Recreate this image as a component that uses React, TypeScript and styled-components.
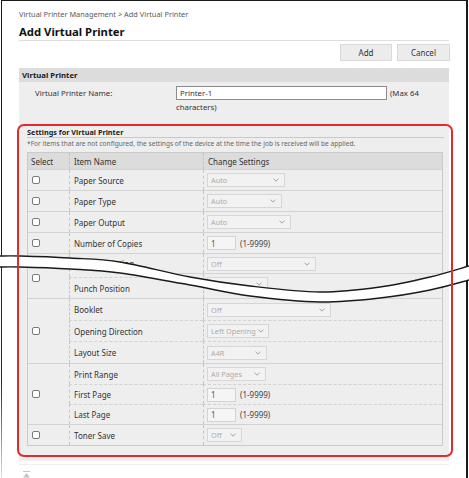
import React from 'react';
import styled, { createGlobalStyle, css } from 'styled-components';

const CANVAS_W = 469;
const CANVAS_H = 478;

type Pt = [number, number];
type Part = 'upper' | 'lower';

// Catmull-Rom spline through the points, written as cubic bezier segments.
function smoothPath(pts: Pt[]): string {
  let d = `M${pts[0][0]} ${pts[0][1]}`;
  for (let i = 0; i < pts.length - 1; i++) {
    const p0 = pts[i - 1] ?? pts[i];
    const p1 = pts[i];
    const p2 = pts[i + 1];
    const p3 = pts[i + 2] ?? p2;
    const c1x = p1[0] + (p2[0] - p0[0]) / 6;
    const c1y = p1[1] + (p2[1] - p0[1]) / 6;
    const c2x = p2[0] - (p3[0] - p1[0]) / 6;
    const c2y = p2[1] - (p3[1] - p1[1]) / 6;
    d += ` C${c1x.toFixed(1)} ${c1y.toFixed(1)} ${c2x.toFixed(1)} ${c2y.toFixed(1)} ${p2[0]} ${p2[1]}`;
  }
  return d;
}

const upperEdge = smoothPath([
  [0, 256], [20, 256], [70, 258], [120, 262], [190, 277], [250, 286],
  [320, 292], [380, 287], [430, 277], [469, 266],
]);
const lowerEdge = smoothPath([
  [0, 267], [20, 267], [70, 269], [120, 273], [190, 285], [250, 296],
  [320, 302], [380, 298], [430, 290], [469, 280],
]);

const upperClip = `${upperEdge} L${CANVAS_W} 0 L0 0 Z`;
const lowerClip = `${lowerEdge} L${CANVAS_W} ${CANVAS_H} L0 ${CANVAS_H} Z`;

const GlobalStyle = createGlobalStyle`
  html, body { margin: 0; padding: 0; background: #ffffff; }
  body { font-family: "Noto Sans", "Open Sans", sans-serif; }
  * { box-sizing: border-box; }
`;

const Canvas = styled.div`
  position: relative;
  width: ${CANVAS_W}px;
  height: ${CANVAS_H}px;
  overflow: hidden;
  display: grid;
  background: #ffffff;
`;

const Sheet = styled.div<{ $clip: string }>`
  grid-area: 1 / 1;
  width: ${CANVAS_W}px;
  height: ${CANVAS_H}px;
  clip-path: ${p => `path('${p.$clip}')`};
`;

const Frame = styled.div<{ $part: Part }>`
  margin-left: 1px;
  width: 467px;
  height: 100%;
  overflow: hidden;
  border-left: 1px solid #1a1a1a;
  border-right: 2px solid #1a1a1a;
  border-top: ${p => (p.$part === 'upper' ? '1px solid #1a1a1a' : 'none')};
  background: #ffffff;
  ${p =>
    p.$part === 'lower' &&
    css`
      border-left-color: transparent;
      background: linear-gradient(#262626, #262626 80%, #e0e0e0) left top / 1px 100% no-repeat border-box,
        #ffffff;
    `}
`;

// Parts of the page that lie wholly on the other sheet keep their place in the flow but are not painted.
const hideable = css<{ $hide?: boolean }>`
  visibility: ${p => (p.$hide ? 'hidden' : 'visible')};
`;

const Page = styled.div<{ $shift: number }>`
  margin-top: ${p => p.$shift}px;
  padding: 0 17px;
  color: #333;
  font-size: 8px;
`;

const Breadcrumb = styled.div<{ $hide?: boolean }>`
  ${hideable}
  padding-top: 7px;
  line-height: 12px;
  font-size: 7.4px;
  color: #5a5a5a;
  white-space: nowrap;
`;

const Title = styled.h1`
  margin: 4px 0 0;
  font-size: 11.3px;
  line-height: 16px;
  font-weight: 700;
  color: #111;
  border-bottom: 1px solid #dedede;
`;

const Hideable = styled.span<{ $hide?: boolean }>`
  ${hideable}
`;

const ButtonBar = styled.div<{ $hide?: boolean }>`
  ${hideable}
  display: flex;
  justify-content: flex-end;
  gap: 5px;
  margin-top: 3px;
  margin-right: -1px;
`;

const Button = styled.div<{ $w: number }>`
  width: ${p => p.$w}px;
  height: 17px;
  display: flex;
  align-items: center;
  justify-content: center;
  background: #ececec;
  border: 1px solid #d9d9d9;
  font-size: 8px;
  color: #333;
`;

const SectionHeader = styled.div<{ $hide?: boolean }>`
  ${hideable}
  margin-top: 7px;
  height: 14px;
  padding-left: 3px;
  display: flex;
  align-items: center;
  background: #dcdcdc;
  font-weight: 700;
  font-size: 7.8px;
  color: #222;
`;

const PanelBody = styled.div`
  background: #eeeeee;
  padding-bottom: 15px;
`;

const FormRow = styled.div<{ $hide?: boolean }>`
  ${hideable}
  display: flex;
  padding: 4px 0 0 16px;
  line-height: 14px;
  font-size: 7.8px;
`;

const FormLabel = styled.div`
  width: 141px;
  flex: none;
`;

const FormValue = styled.div`
  flex: 1;
  min-width: 0;
`;

const TextInput = styled.span`
  display: inline-block;
  vertical-align: top;
  width: 211px;
  height: 14px;
  margin-right: 3px;
  padding-left: 3px;
  line-height: 12px;
  background: #ffffff;
  border: 1px solid #8c8c8c;
  color: #333;
`;

const Settings = styled.div`
  margin: 0 5px 0 8px;
`;

const SettingsTitle = styled.div`
  margin-top: 13px;
  line-height: 10px;
  font-weight: 700;
  font-size: 7.3px;
  color: #222;
  border-bottom: 1px solid #c9c9c9;
`;

const Note = styled.div<{ $hide?: boolean }>`
  ${hideable}
  margin-top: 1px;
  line-height: 10px;
  font-size: 6.6px;
  color: #666;
  white-space: nowrap;
`;

const Table = styled.div`
  margin-top: 3px;
  margin-right: 1px;
  border: 1px solid #cacaca;
  background: #eeeeee;
`;

const HeaderRow = styled.div`
  display: grid;
  grid-template-columns: 41px 134px 1fr;
  height: 16px;
  background: #dcdcdc;
  color: #333;
`;

const HeaderCell = styled.div<{ $first?: boolean }>`
  display: flex;
  align-items: center;
  padding-left: ${p => (p.$first ? 3 : 4)}px;
  border-left: ${p => (p.$first ? 'none' : '1px dashed #c4c4c4')};
`;

const Group = styled.div<{ $rows: number[] }>`
  display: grid;
  grid-template-columns: 41px 134px 1fr;
  grid-template-rows: ${p => p.$rows.map(h => `${h}px`).join(' ')};
  border-top: 1px solid #d2d2d2;
`;

const CheckCell = styled.div<{ $span: number }>`
  grid-row: span ${p => p.$span};
  display: flex;
  align-items: center;
  padding-left: 4px;
`;

const Checkbox = styled.span<{ $hide?: boolean }>`
  ${hideable}
  width: 8px;
  height: 8px;
  border: 1px solid #7a7a7a;
  border-radius: 2px;
  background: #ffffff;
`;

const NameCell = styled.div<{ $sub: boolean }>`
  grid-column: 2;
  display: flex;
  align-items: center;
  padding-left: 4px;
  border-left: 1px dashed #c4c4c4;
  border-top: ${p => (p.$sub ? '1px dashed #d2d2d2' : 'none')};
  color: #333;
  white-space: nowrap;
`;

const ControlCell = styled.div<{ $sub: boolean }>`
  grid-column: 3;
  display: flex;
  align-items: center;
  padding-left: 3px;
  border-left: 1px dashed #c4c4c4;
  border-top: ${p => (p.$sub ? '1px dashed #d2d2d2' : 'none')};
`;

const ControlWrap = styled.span<{ $hide?: boolean }>`
  ${hideable}
  display: flex;
  align-items: center;
`;

const SelectBox = styled.span<{ $w: number }>`
  width: ${p => p.$w}px;
  height: 14px;
  display: flex;
  align-items: center;
  justify-content: space-between;
  gap: 2px;
  padding: 0 5px 0 3px;
  background: #f2f2f2;
  border: 1px solid #d6d6d6;
  color: #ababab;
  font-size: 7.3px;
  white-space: nowrap;
`;

const NumberBox = styled.span`
  width: 29px;
  height: 14px;
  display: flex;
  align-items: center;
  padding-left: 3px;
  background: #f5f5f5;
  border: 1px solid #d3d3d3;
  color: #555;
`;

const RangeText = styled.span`
  margin-left: 4px;
  color: #444;
`;

const Footer = styled.div<{ $hide?: boolean }>`
  ${hideable}
  margin-top: 3px;
  padding: 4px 0 0 4px;
  border-top: 1px solid #eeeeee;
  height: 20px;
`;

const Overlay = styled.svg`
  position: absolute;
  left: 0;
  top: 0;
  pointer-events: none;
`;

const Highlight = styled.div`
  position: absolute;
  left: 17px;
  top: 124px;
  width: 436px;
  height: 333px;
  border: 2px solid #e52a2f;
  border-radius: 7px;
  pointer-events: none;
`;

const Chevron = () => (
  <svg width="6" height="4" viewBox="0 0 6 4" style={{ flex: 'none' }}>
    <path d="M0.5 0.6 L3 3.2 L5.5 0.6" fill="none" stroke="#9a9a9a" strokeWidth="0.9" />
  </svg>
);

const PageTopIcon = () => (
  <svg width="7" height="7" viewBox="0 0 7 7">
    <rect x="0" y="0" width="7" height="1" fill="#c4c4c4" />
    <path d="M3.5 2 L7 6.5 L0 6.5 Z" fill="#c4c4c4" />
  </svg>
);

type Control =
  | { kind: 'select'; value: string; w: number }
  | { kind: 'number'; value: string };

const BOTH: Part[] = ['upper', 'lower'];
const UP: Part[] = ['upper'];
const DOWN: Part[] = ['lower'];
const NONE: Part[] = [];

// Each cell lists the halves of the torn page on which it is painted.
type Item = { name: string; control: Control; nameOn?: Part[]; controlOn?: Part[] };
type SettingGroup = { id: string; rows: number[]; items: Item[]; on: Part[]; checkOn?: Part[] };

const groups: SettingGroup[] = [
  { id: 'source', rows: [20], on: UP, items: [{ name: 'Paper Source', control: { kind: 'select', value: 'Auto', w: 78 } }] },
  { id: 'type', rows: [20], on: UP, items: [{ name: 'Paper Type', control: { kind: 'select', value: 'Auto', w: 75 } }] },
  { id: 'output', rows: [20], on: UP, items: [{ name: 'Paper Output', control: { kind: 'select', value: 'Auto', w: 84 } }] },
  { id: 'copies', rows: [20], on: UP, items: [{ name: 'Number of Copies', control: { kind: 'number', value: '1' } }] },
  { id: 'duplex', rows: [19], on: UP, items: [{ name: '2-Sided Printing', control: { kind: 'select', value: 'Off', w: 109 } }] },
  {
    id: 'punch',
    rows: [19, 21],
    on: BOTH,
    checkOn: DOWN,
    items: [
      { name: 'Punch', nameOn: NONE, controlOn: UP, control: { kind: 'select', value: 'Off', w: 61 } },
      { name: 'Punch Position', nameOn: DOWN, controlOn: NONE, control: { kind: 'select', value: 'Left', w: 61 } },
    ],
  },
  {
    id: 'booklet',
    rows: [21, 21, 22],
    on: DOWN,
    items: [
      { name: 'Booklet', control: { kind: 'select', value: 'Off', w: 124 } },
      { name: 'Opening Direction', control: { kind: 'select', value: 'Left Opening', w: 62 } },
      { name: 'Layout Size', control: { kind: 'select', value: 'A4R', w: 60 } },
    ],
  },
  {
    id: 'range',
    rows: [20, 20, 20],
    on: DOWN,
    items: [
      { name: 'Print Range', control: { kind: 'select', value: 'All Pages', w: 59 } },
      { name: 'First Page', control: { kind: 'number', value: '1' } },
      { name: 'Last Page', control: { kind: 'number', value: '1' } },
    ],
  },
  { id: 'toner', rows: [20], on: DOWN, items: [{ name: 'Toner Save', control: { kind: 'select', value: 'Off', w: 35 } }] },
];

const ControlView = ({ control, hide }: { control: Control; hide: boolean }) =>
  control.kind === 'select' ? (
    <ControlWrap $hide={hide}>
      <SelectBox $w={control.w}>
        <span>{control.value}</span>
        <Chevron />
      </SelectBox>
    </ControlWrap>
  ) : (
    <ControlWrap $hide={hide}>
      <NumberBox>{control.value}</NumberBox>
      <RangeText>(1-9999)</RangeText>
    </ControlWrap>
  );

const SettingsPage = ({ part, shift }: { part: Part; shift: number }) => {
  const top = part === 'lower';
  const bottom = part === 'upper';
  return (
    <Page $shift={shift}>
      <Breadcrumb $hide={top}>Virtual Printer Management &gt; Add Virtual Printer</Breadcrumb>
      <Title>
        <Hideable $hide={top}>Add Virtual Printer</Hideable>
      </Title>
      <ButtonBar $hide={top}>
        <Button $w={52}>Add</Button>
        <Button $w={53}>Cancel</Button>
      </ButtonBar>
      <SectionHeader $hide={top}>Virtual Printer</SectionHeader>
      <PanelBody>
        <FormRow $hide={top}>
          <FormLabel>Virtual Printer Name:</FormLabel>
          <FormValue>
            <TextInput>Printer-1</TextInput>(Max 64 characters)
          </FormValue>
        </FormRow>
        <Settings>
          <SettingsTitle>
            <Hideable $hide={top}>Settings for Virtual Printer</Hideable>
          </SettingsTitle>
          <Note $hide={top}>
            *For items that are not configured, the settings of the device at the time the job is received will be
            applied.
          </Note>
          <Table>
            <HeaderRow>
              <HeaderCell $first>
                <Hideable $hide={top}>Select</Hideable>
              </HeaderCell>
              <HeaderCell>
                <Hideable $hide={top}>Item Name</Hideable>
              </HeaderCell>
              <HeaderCell>
                <Hideable $hide={top}>Change Settings</Hideable>
              </HeaderCell>
            </HeaderRow>
            {groups.map(g => (
              <Group key={g.id} $rows={g.rows}>
                <CheckCell $span={g.items.length}>
                  <Checkbox $hide={!(g.checkOn ?? g.on).includes(part)} />
                </CheckCell>
                {g.items.map((it, i) => (
                  <React.Fragment key={it.name}>
                    <NameCell $sub={i > 0}>
                      <Hideable $hide={!(it.nameOn ?? g.on).includes(part)}>{it.name}</Hideable>
                    </NameCell>
                    <ControlCell $sub={i > 0}>
                      <ControlView control={it.control} hide={!(it.controlOn ?? g.on).includes(part)} />
                    </ControlCell>
                  </React.Fragment>
                ))}
              </Group>
            ))}
          </Table>
        </Settings>
      </PanelBody>
      <Footer $hide={bottom}>
        <PageTopIcon />
      </Footer>
    </Page>
  );
};

export default function App() {
  return (
    <>
      <GlobalStyle />
      <Canvas>
        <Sheet $clip={upperClip}>
          <Frame $part="upper">
            <SettingsPage part="upper" shift={0} />
          </Frame>
        </Sheet>
        <Sheet $clip={lowerClip}>
          <Frame $part="lower">
            <SettingsPage part="lower" shift={-15} />
          </Frame>
        </Sheet>
        <Overlay width={CANVAS_W} height={CANVAS_H} viewBox={`0 0 ${CANVAS_W} ${CANVAS_H}`}>
          <path d={upperEdge} fill="none" stroke="#1a1a1a" strokeWidth="1.4" />
          <path d={lowerEdge} fill="none" stroke="#1a1a1a" strokeWidth="1.4" />
        </Overlay>
        <Highlight />
      </Canvas>
    </>
  );
}
